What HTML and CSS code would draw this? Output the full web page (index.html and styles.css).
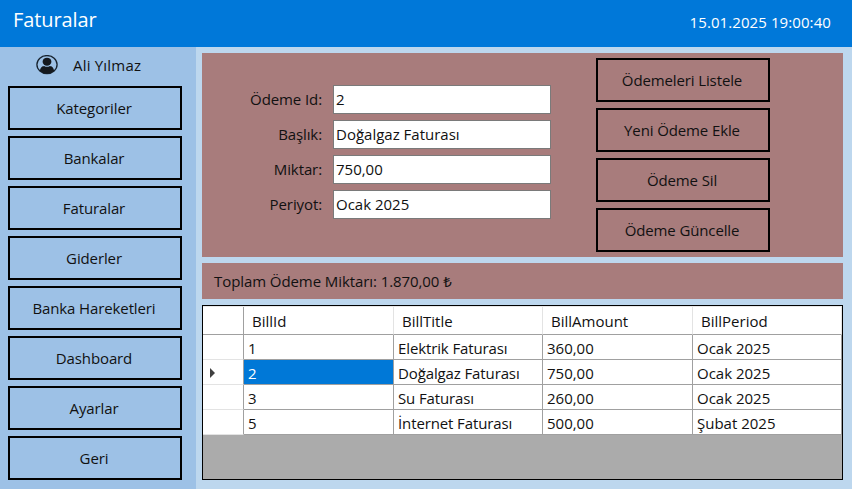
FILE: index.html
```html
<!DOCTYPE html>
<html lang="tr">
<head>
<meta charset="utf-8">
<title>Faturalar</title>
<link rel="stylesheet" href="styles.css">
</head>
<body>
<header class="topbar"><h1>Faturalar</h1><time>15.01.2025 19:00:40</time></header>
<div class="layout">
  <aside class="sidebar">
    <div class="user">
      <svg class="avatar" viewBox="0 0 22 20" width="22" height="20">
        <ellipse cx="11" cy="9.6" rx="10.1" ry="9" fill="none" stroke="#17232f" stroke-width="1.3"/>
        <ellipse cx="11" cy="6.7" rx="4.4" ry="4" fill="#15191e"/>
        <path d="M3.9 16C4.3 12.4 6.2 11.1 8.1 10.9Q11 12.7 13.9 10.9C15.8 11.1 17.7 12.4 18.1 16Q15 18.6 11 18.6T3.9 16Z" fill="#15191e"/>
      </svg>
      <span>Ali Yılmaz</span>
    </div>
    <nav class="stack">
      <button class="btn">Kategoriler</button>
      <button class="btn">Bankalar</button>
      <button class="btn">Faturalar</button>
      <button class="btn">Giderler</button>
      <button class="btn">Banka Hareketleri</button>
      <button class="btn">Dashboard</button>
      <button class="btn">Ayarlar</button>
      <button class="btn">Geri</button>
    </nav>
  </aside>
  <main class="content">
    <section class="panel editor">
      <div class="fields">
        <label for="id">Ödeme Id:</label><input id="id" value="2">
        <label for="title">Başlık:</label><input id="title" value="Doğalgaz Faturası">
        <label for="amount">Miktar:</label><input id="amount" value="750,00">
        <label for="period">Periyot:</label><input id="period" value="Ocak 2025">
      </div>
      <div class="stack">
        <button class="btn">Ödemeleri Listele</button>
        <button class="btn">Yeni Ödeme Ekle</button>
        <button class="btn">Ödeme Sil</button>
        <button class="btn">Ödeme Güncelle</button>
      </div>
    </section>
    <section class="panel total">Toplam Ödeme Miktarı: 1.870,00 ₺</section>
    <section class="grid">
      <div class="row head"><span></span><span>BillId</span><span>BillTitle</span><span>BillAmount</span><span>BillPeriod</span></div>
      <div class="row"><span></span><span>1</span><span class="name">Elektrik Faturası</span><span>360,00</span><span>Ocak 2025</span></div>
      <div class="row"><span><i class="marker"></i></span><span class="selected">2</span><span class="name">Doğalgaz Faturası</span><span>750,00</span><span>Ocak 2025</span></div>
      <div class="row"><span></span><span>3</span><span class="name">Su Faturası</span><span>260,00</span><span>Ocak 2025</span></div>
      <div class="row"><span></span><span>5</span><span class="name">İnternet Faturası</span><span>500,00</span><span>Şubat 2025</span></div>
    </section>
  </main>
</div>
</body>
</html>
```
FILE: styles.css
```css
* { box-sizing: border-box; }
body {
  margin: 0;
  width: 852px;
  height: 489px;
  overflow: hidden;
  background: #bdd7ee;
  color: #111;
  font: 15px/20px "Open Sans", "Noto Sans", sans-serif;
}
button, input { font: inherit; color: inherit; letter-spacing: inherit; }
.topbar {
  height: 47px;
  display: flex;
  justify-content: space-between;
  padding: 0 21px 0 13px;
  background: #0078d9;
  color: #fff;
}
.topbar h1 { margin: 6px 0 0; font-size: 20px; line-height: 28px; font-weight: 400; letter-spacing: -0.1px; }
.topbar time { margin-top: 12px; letter-spacing: 0.09px; }
.layout { display: flex; height: 442px; }
.sidebar { width: 196px; padding: 0 14px 0 8px; background: #9dc1e6; }
.user { display: flex; height: 39px; padding: 8px 0 0 28px; gap: 15px; letter-spacing: 0.2px; }
.avatar { display: block; flex: none; }
.stack { display: flex; flex-direction: column; gap: 6px; width: 174px; }
.btn {
  height: 44px;
  padding: 0 2px 0 0;
  border: 2px solid #000;
  background: transparent;
  letter-spacing: -0.12px;
  white-space: nowrap;
}
.content { flex: 1; padding: 6px 9px 9px 6px; display: flex; flex-direction: column; gap: 6px; }
.panel { background: #a87c7c; }
.editor { height: 204px; display: flex; padding: 5px 73px 0 0; justify-content: space-between; }
.fields {
  display: grid;
  grid-template-columns: 120px 218px;
  grid-auto-rows: 29px;
  gap: 6px 11px;
  padding-top: 27px;
}
.fields label { text-align: right; line-height: 29px; letter-spacing: -0.1px; }
.fields input { width: 218px; height: 29px; padding: 0 2px 2px; border: 1px solid #7a7a7a; background: #fff; border-radius: 0; }
.total { height: 36px; padding-left: 12px; line-height: 36px; letter-spacing: -0.08px; }
.grid { height: 175px; border: 1px solid #000; background: #ababab; }
.row {
  display: grid;
  grid-template-columns: 41px 150px 149px 150px 149px;
  height: 25px;
  background: #fff;
}
.row span { padding: 2px 0 0 4px; line-height: 22px; border-right: 1px solid #a0a0a0; border-bottom: 1px solid #a0a0a0; white-space: nowrap; }
.row span:first-child { border-bottom-color: #e3e3e3; padding: 8px 0 0 7px; }
.row.head { height: 29px; border-top: 1px solid #e8e8e8; }
.row.head span { padding: 2px 0 0 8px; line-height: 25px; border-right-color: #e3e3e3; border-bottom-color: #a0a0a0; }
.row.head span:first-child { border-right-color: #a0a0a0; }
.row .name { letter-spacing: -0.12px; }
.row .selected { background: #0078d7; color: #fff; }
.marker { display: block; width: 0; height: 0; border: 5px solid transparent; border-left-color: #404040; border-right: 0; }
```
